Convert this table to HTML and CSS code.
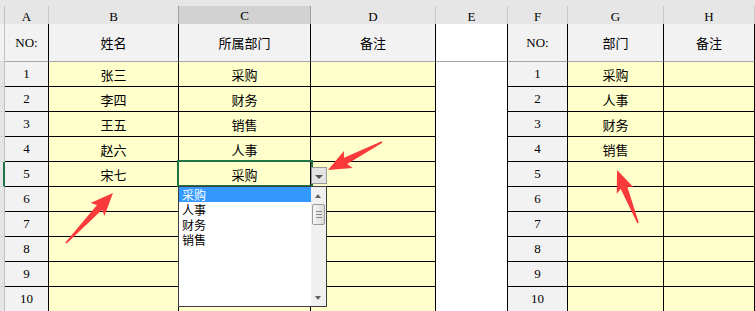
FILE: index.html
```html
<!DOCTYPE html>
<html lang="zh">
<head>
<meta charset="utf-8">
<title>Sheet</title>
<link rel="stylesheet" href="styles.css">
</head>
<body>
<div class="sheet">
  <div class="top"></div>
  <div class="r cols">
    <div class="rh"></div><div>A</div><div class="pre">B</div><div class="sel">C</div><div>D</div><div>E</div><div>F</div><div>G</div><div>H</div>
  </div>
  <div class="r hdr">
    <div class="rh"></div><div class="num">NO:</div><div>姓名</div><div>所属部门</div><div>备注</div><div class="e"></div><div class="num">NO:</div><div>部门</div><div>备注</div>
  </div>
  <div class="r d"><div class="rh"></div><div class="a num">1</div><div class="y">张三</div><div class="y">采购</div><div class="y"></div><div class="e"></div><div class="a num">1</div><div class="y">采购</div><div class="y"></div></div>
  <div class="r d"><div class="rh"></div><div class="a num">2</div><div class="y">李四</div><div class="y">财务</div><div class="y"></div><div class="e"></div><div class="a num">2</div><div class="y">人事</div><div class="y"></div></div>
  <div class="r d"><div class="rh"></div><div class="a num">3</div><div class="y">王五</div><div class="y">销售</div><div class="y"></div><div class="e"></div><div class="a num">3</div><div class="y">财务</div><div class="y"></div></div>
  <div class="r d"><div class="rh"></div><div class="a num">4</div><div class="y">赵六</div><div class="y">人事</div><div class="y"></div><div class="e"></div><div class="a num">4</div><div class="y">销售</div><div class="y"></div></div>
  <div class="r d"><div class="rh act"></div><div class="a num">5</div><div class="y">宋七</div><div class="y">采购</div><div class="y"></div><div class="e"></div><div class="a num">5</div><div class="y"></div><div class="y"></div></div>
  <div class="r d"><div class="rh"></div><div class="a num">6</div><div class="y"></div><div class="y"></div><div class="y"></div><div class="e"></div><div class="a num">6</div><div class="y"></div><div class="y"></div></div>
  <div class="r d"><div class="rh"></div><div class="a num">7</div><div class="y"></div><div class="y"></div><div class="y"></div><div class="e"></div><div class="a num">7</div><div class="y"></div><div class="y"></div></div>
  <div class="r d"><div class="rh"></div><div class="a num">8</div><div class="y"></div><div class="y"></div><div class="y"></div><div class="e"></div><div class="a num">8</div><div class="y"></div><div class="y"></div></div>
  <div class="r d"><div class="rh"></div><div class="a num">9</div><div class="y"></div><div class="y"></div><div class="y"></div><div class="e"></div><div class="a num">9</div><div class="y"></div><div class="y"></div></div>
  <div class="r d"><div class="rh"></div><div class="a num">10</div><div class="y"></div><div class="y"></div><div class="y"></div><div class="e"></div><div class="a num">10</div><div class="y"></div><div class="y"></div></div>

  <div class="selbox"></div>
  <div class="ddbtn"><span class="tri-down"></span></div>
  <div class="dd">
    <ul class="list">
      <li class="hl">采购</li>
      <li>人事</li>
      <li>财务</li>
      <li>销售</li>
    </ul>
    <div class="sb">
      <span class="tri-up small"></span>
      <div class="thumb"><i></i><i></i><i></i></div>
      <span class="tri-down small bottom"></span>
    </div>
  </div>

  <svg class="arrows" width="755" height="311" viewBox="0 0 755 311">
    <g fill="#f83a3a">
      <polygon transform="translate(66 243) rotate(-46.8)" points="0,-0.8 49,-3.5 46,-9.5 68.6,0 46,9.5 49,3.5 0,0.8"/>
      <polygon transform="translate(382 142) rotate(152.6)" points="0,-0.8 41,-3.5 38,-9.5 60.8,0 38,9.5 41,3.5 0,0.8"/>
      <polygon transform="translate(638 223) rotate(-111.6)" points="0,-0.8 38,-3.5 35,-9 57,0 35,9 38,3.5 0,0.8"/>
    </g>
  </svg>
</div>
</body>
</html>
```
FILE: styles.css
```css
html, body {
  margin: 0;
  padding: 0;
  background: #fff;
}

.sheet {
  position: relative;
  width: 755px;
  height: 311px;
  overflow: hidden;
  font-family: "Noto Sans CJK SC", "Liberation Sans", sans-serif;
  font-size: 13px;
  color: #000;
}

.top {
  height: 6px;
  background: #e6e6e6;
}

.r {
  display: grid;
  grid-template-columns: 5px 44px 130px 132px 125px 72px 60px 96px 91px;
}

.r > div {
  box-sizing: border-box;
  display: flex;
  align-items: center;
  justify-content: center;
  white-space: nowrap;
}

/* column letters */
.cols {
  height: 18px;
  background: #e6e6e6;
}
.cols > div {
  border-right: 1px solid #c8c8c8;
  border-bottom: 1px solid #9e9e9e;
  font-family: "Liberation Serif", serif;
  font-size: 13px;
  line-height: 17px;
  padding-top: 1px;
}
.cols > .pre {
  border-right-color: #9e9e9e;
}
.cols > .sel {
  background: #d2d2d2;
  border-right-color: #9e9e9e;
  border-bottom: 2px solid #217346;
}

/* header row */
.hdr {
  height: 38px;
}
.hdr > div {
  background: #f2f2f2;
  border-right: 1px solid #000;
  border-bottom: 1px solid #a6a6a6;
}
.hdr > .e {
  background: #fff;
}

.rh {
  background: #e6e6e6;
  border-right: 1px solid #c0c0c0 !important;
  border-bottom: 1px solid #d4d4d4 !important;
}
.rh.act {
  border-right: 2px solid #217346 !important;
}

/* data rows */
.d {
  height: 25px;
}
.d > div {
  border-right: 1px solid #000;
  border-bottom: 1px solid #000;
}
.d > .a {
  background: #f2f2f2;
}
.d > .y {
  background: #ffffcc;
}
.d > .e {
  background: #fff;
  border-bottom: none;
}

.num {
  font-family: "Liberation Serif", serif;
  font-size: 13px;
}

/* active cell */
.selbox {
  position: absolute;
  left: 177px;
  top: 160px;
  width: 136px;
  height: 27px;
  box-sizing: border-box;
  border: 2px solid #217346;
}

.ddbtn {
  position: absolute;
  left: 311px;
  top: 167px;
  width: 16px;
  height: 17px;
  box-sizing: border-box;
  background: #e3e3e3;
  border: 1px solid #9a9a9a;
  display: flex;
  align-items: center;
  justify-content: center;
  padding-top: 2px;
}

.tri-down {
  width: 0;
  height: 0;
  border-left: 4px solid transparent;
  border-right: 4px solid transparent;
  border-top: 4px solid #555;
}
.tri-up {
  width: 0;
  height: 0;
  border-left: 4px solid transparent;
  border-right: 4px solid transparent;
  border-bottom: 4px solid #555;
}

/* dropdown list */
.dd {
  position: absolute;
  left: 178px;
  top: 186px;
  width: 149px;
  height: 121px;
  box-sizing: border-box;
  border: 1px solid #3c3c3c;
  background: #fff;
  display: flex;
}

.list {
  list-style: none;
  margin: 0;
  padding: 0;
  width: 132px;
}
.list li {
  height: 15px;
  line-height: 15px;
  padding-left: 3px;
  font-size: 12px;
  overflow: hidden;
}
.list li.hl {
  background: #3399ff;
  color: #fff;
}

.sb {
  position: relative;
  flex: 1;
  background: #f0f0f0;
}
.sb .small {
  position: absolute;
  left: 4px;
  border-left-width: 3.5px;
  border-right-width: 3.5px;
}
.sb .tri-up.small {
  top: 7px;
  border-bottom-width: 4px;
  border-bottom-color: #606060;
}
.sb .tri-down.small.bottom {
  top: 109px;
  border-top-color: #606060;
}

.thumb {
  position: absolute;
  left: 1px;
  top: 17px;
  width: 13px;
  height: 21px;
  box-sizing: border-box;
  border: 1px solid #9a9a9a;
  border-radius: 2px;
  background: linear-gradient(to right, #f7f7f7, #dadada);
  display: flex;
  flex-direction: column;
  align-items: center;
  justify-content: center;
  gap: 2px;
}
.thumb i {
  display: block;
  width: 6px;
  height: 1px;
  background: #8a8a8a;
}

.arrows {
  position: absolute;
  left: 0;
  top: 0;
  pointer-events: none;
}
```
